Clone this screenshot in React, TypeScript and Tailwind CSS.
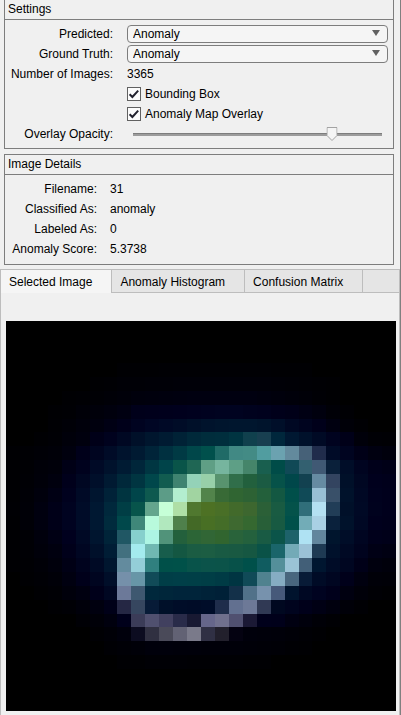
import { useState } from "react";
import type { ReactNode } from "react";

type HeatRow = { y: number; x: number; cells: string };

// Each row lists the colours of consecutive cells, beginning at column x of a 28 x 28 grid.
const heatRows: HeatRow[] = [
  { y: 3, x: 8, cells: "000003 000003 000003 000004 000004 000004 000004 000004 000004 000004 000004 000003 000003 000003" },
  { y: 4, x: 6, cells: "000003 000004 000006 000006 000007 000007 000008 000008 000008 000008 000008 000008 000008 000007 000006 000005 000004 000003" },
  { y: 5, x: 4, cells: "000003 000004 000005 000007 000009 00000c 00000d 00000e 00000f 000010 000010 000010 000010 000010 00000e 00000c 00000a 000008 000005 000003" },
  { y: 6, x: 3, cells: "000003 000004 000008 00000a 00000d 000011 00001a 00001b 00001c 00001d 00011e 00021f 000320 000320 00021e 00011d 00001a 000018 000013 00000e 000007 000004" },
  { y: 7, x: 3, cells: "000004 000007 00000b 00000e 000014 00001a 000320 000624 000926 000c27 001029 00132c 00152d 00162e 00162e 00142c 000f29 000823 00041f 00001a 000010 000008 000004" },
  { y: 8, x: 2, cells: "000003 000005 00000a 00000e 000018 00021e 000823 001029 00162e 001b32 002236 00293a 002d3c 002e3d 003441 10404d 183f50 00273c 001832 00112b 000a25 00031f 000018 00000a 000005 000004" },
  { y: 9, x: 0, cells: "000003 000004 000006 000008 00000e 00001a 000520 000b27 00132d 001a32 002439 003040 003a44 00474a 00504c 206b67 418984 438b85 519da0 6ba2b0 638a9d 466178 202c4b 000b27 000420 000017 000010 00000c" },
  { y: 10, x: 0, cells: "000003 000004 000008 00000a 000016 00021e 000a26 00122c 001b33 00263a 003642 00444a 095449 1f6654 5f9f85 76b59e 5e9f86 45856a 195f4f 004c48 104956 336070 405974 0a203a 000d28 000420 00001a 000017" },
  { y: 11, x: 0, cells: "000003 000005 000009 00000e 00001b 000722 000f2a 001a32 00283a 003541 00474b 115c50 3f8370 94d2b8 98d0a9 58936e 306e4a 22603d 1b5b43 065249 00474a 124150 668ba2 334460 001029 000722 00001d 00001b" },
  { y: 12, x: 0, cells: "000003 000006 00000c 000014 00011e 000a26 00152f 002238 003440 00454a 0e594f 5c9c87 b3eecf a1d4a1 52844b 386a36 306532 2d6234 23603b 135842 004f4a 104a57 98bfd4 395069 00122b 000824 00011e 00001c" },
  { y: 13, x: 0, cells: "000004 000007 00000f 000018 000320 000c28 001832 00283c 003e45 07544b 64a58d c6ffd7 afdfa6 50782f 4d7124 496f27 426a2b 3d672f 2b6037 195b42 04524a 306e7a b4e0f2 213d57 001029 000925 00021e 00001c" },
  { y: 14, x: 0, cells: "000003 000007 00000f 000018 000320 000c28 001832 002b3d 00484b 3f8779 b8fadc b1e8be 4f804b 436926 486f24 446d28 3e6930 356830 285f38 185a42 00504a 72acb7 a9d0e4 0a213c 00122b 000824 00001d 00001b" },
  { y: 15, x: 0, cells: "000003 000005 00000c 000014 00001e 000925 00152f 002439 205764 86d0cd adf5e4 51937a 23603c 2c6536 316635 31652f 29633a 24613d 195b44 0b5449 1d626a afe2f3 62869d 00152d 000d28 000521 00001b 000019" },
  { y: 16, x: 0, cells: "000003 000005 00000a 00000f 00001a 000622 00102a 001d35 42707f a4ebee 70b8b2 175d4c 145742 1b5c43 1c5d43 195a43 195942 165742 0a5247 1a656a 73aab7 9bc1d6 1e3a53 00112b 000924 00031e 000015 000012" },
  { y: 17, x: 0, cells: "000003 000004 000007 00000c 000015 00031e 000a25 00162f 638b9e 94ced8 30807f 005049 005149 08534a 0b534a 0b5349 075149 00504a 105c60 548f9a 9ac3d6 425f78 001630 000c27 000621 000018 00000e 00000b" },
  { y: 18, x: 0, cells: "000000 000003 000005 000008 000010 00001a 000520 000e29 7590aa 6796a7 114b58 003e47 003f48 003f47 003e46 003b45 003542 104a57 50828f 86adc3 48667e 081b37 000b26 000621 00001a 00000f 000008 000007" },
  { y: 19, x: 2, cells: "000003 000005 00000b 000010 00001a 000722 6c7999 3e5870 00283c 00263a 00243a 00243a 002238 002037 133049 517189 7792ad 46597a 00132d 000823 000320 00001b 000010 000009 000005 000003" },
  { y: 20, x: 3, cells: "000003 000005 00000a 00000f 000018 252744 36465f 071b37 001029 000d28 000c27 000d29 1f2d4b 627090 6d7997 303954 000820 00041e 00001a 000014 00000e 000008 000004" },
  { y: 21, x: 5, cells: "000005 000008 00000e 00001b 3b3c58 50506f 41405f 292b49 181932 66668a 70708d 505070 1b1935 00001b 00001a 000011 00000c 000007 000004" },
  { y: 22, x: 6, cells: "000004 000007 00000c 0c0c20 303041 4a4a59 626274 7a7a8a 303044 22202c 040211 00000b 00000a 000009 000007 000005 000003" },
  { y: 23, x: 7, cells: "000004 000006 000008 00000b 00000b 00000a 00000a 000009 000009 000009 000008 000007 000006 000004 000003" },
  { y: 24, x: 8, cells: "000003 000003 000005 000005 000005 000004 000004 000004 000004 000003 000003" },
];

function Heatmap() {
  return (
    <svg
      role="img"
      aria-label="Anomaly map overlay"
      viewBox="0 0 28 28"
      shapeRendering="crispEdges"
      className="block aspect-square w-full bg-black"
    >
      {heatRows.map((row) =>
        row.cells.split(" ").map((hex, i) => (
          <rect key={`${row.y}-${i}`} x={row.x + i} y={row.y} width="1" height="1" fill={`#${hex}`} />
        )),
      )}
    </svg>
  );
}

function Dropdown({ id }: { id: string }) {
  return (
    <div className="relative flex items-center">
      <select
        id={id}
        defaultValue="Anomaly"
        className="h-[18px] w-full appearance-none rounded-[4px] border border-[#7d7d7d] bg-[#f5f5f5] px-[5px] leading-4"
      >
        <option>Anomaly</option>
        <option>Normal</option>
      </select>
      <svg viewBox="0 0 8 6" className="pointer-events-none absolute top-[6px] right-2 h-[6px] w-2" aria-hidden="true">
        <path d="M0 0H8L4 6Z" fill="#616161" />
      </svg>
    </div>
  );
}

function CheckRow({ label }: { label: string }) {
  return (
    <label className="col-start-2 flex items-center gap-1">
      <span className="grid">
        <input
          type="checkbox"
          defaultChecked
          className="peer col-start-1 row-start-1 size-[14px] appearance-none border border-[#616161] bg-[#fcfcfc]"
        />
        <svg
          viewBox="0 0 14 14"
          className="pointer-events-none invisible col-start-1 row-start-1 size-[14px] peer-checked:visible"
          aria-hidden="true"
        >
          <path d="M2.6 7.2L5.4 10L11.2 3.6" fill="none" stroke="#22222e" strokeWidth="2" />
        </svg>
      </span>
      {label}
    </label>
  );
}

function OpacitySlider() {
  const [value, setValue] = useState(80);
  return (
    <div className="relative mx-[6px] flex items-center">
      <input
        id="opacity"
        type="range"
        min={0}
        max={100}
        value={value}
        onChange={(e) => setValue(Number(e.target.value))}
        className="h-[3px] w-full appearance-none border-t border-[#7d7d7d] bg-[#9c9c9c] [&::-webkit-slider-thumb]:size-3 [&::-webkit-slider-thumb]:appearance-none"
      />
      <svg
        viewBox="0 0 11 14"
        className="pointer-events-none absolute h-[14px] w-[11px] -translate-x-1/2"
        style={{ left: `${value}%` }}
        aria-hidden="true"
      >
        <path d="M.5 .5H10.5V8.5L5.5 13.5L.5 8.5Z" fill="#f5f5f5" stroke="#a3a3a3" />
      </svg>
    </div>
  );
}

function Panel({ title, children }: { title: string; children: ReactNode }) {
  return (
    <section className="mr-[6px] ml-1 border border-[#7d7d7d] first:border-t-0">
      <h2 className="h-5 border-b border-[#7d7d7d] px-[3px] leading-[19px]">{title}</h2>
      {children}
    </section>
  );
}

const details = [
  ["Filename:", "31"],
  ["Classified As:", "anomaly"],
  ["Labeled As:", "0"],
  ["Anomaly Score:", "5.3738"],
];

const tabs = ["Selected Image", "Anomaly Histogram", "Confusion Matrix"];

export default function App() {
  const [active, setActive] = useState(0);
  return (
    <main className="border-r border-[#808080] bg-[#f0f0f0] font-['Liberation_Sans',Arial,sans-serif] text-[12px] text-black">
      <div className="flex flex-col gap-[5px] pb-1">
        <Panel title="Settings">
          <div className="grid auto-rows-[20px] grid-cols-[108px_1fr] gap-x-[14px] py-1 pr-[5px] leading-5">
            <label htmlFor="predicted" className="text-right">Predicted:</label>
            <Dropdown id="predicted" />
            <label htmlFor="truth" className="text-right">Ground Truth:</label>
            <Dropdown id="truth" />
            <span className="text-right">Number of Images:</span>
            <span>3365</span>
            <CheckRow label="Bounding Box" />
            <CheckRow label="Anomaly Map Overlay" />
            <label htmlFor="opacity" className="text-right">Overlay Opacity:</label>
            <OpacitySlider />
          </div>
        </Panel>
        <Panel title="Image Details">
          <dl className="grid auto-rows-[20px] grid-cols-[92px_1fr] gap-x-[13px] pt-1 pb-[5px] leading-5">
            {details.map(([name, value]) => (
              <div key={name} className="contents">
                <dt className="text-right">{name}</dt>
                <dd>{value}</dd>
              </div>
            ))}
          </dl>
        </Panel>
      </div>
      <div className="border-x border-[#bdbdbd]">
        <div role="tablist" className="flex h-6 border-y border-[#bdbdbd] bg-[#e5e5e5]">
          {tabs.map((tab, i) => (
            <button
              key={tab}
              type="button"
              role="tab"
              aria-selected={i === active}
              onClick={() => setActive(i)}
              className="-mb-px border-r border-[#bdbdbd] pr-[19px] pl-2 aria-selected:bg-[#f5f5f5]"
            >
              {tab}
            </button>
          ))}
        </div>
        <div role="tabpanel" className="pt-7 pr-[3px] pb-1 pl-[5px]">
          <Heatmap />
        </div>
      </div>
    </main>
  );
}
